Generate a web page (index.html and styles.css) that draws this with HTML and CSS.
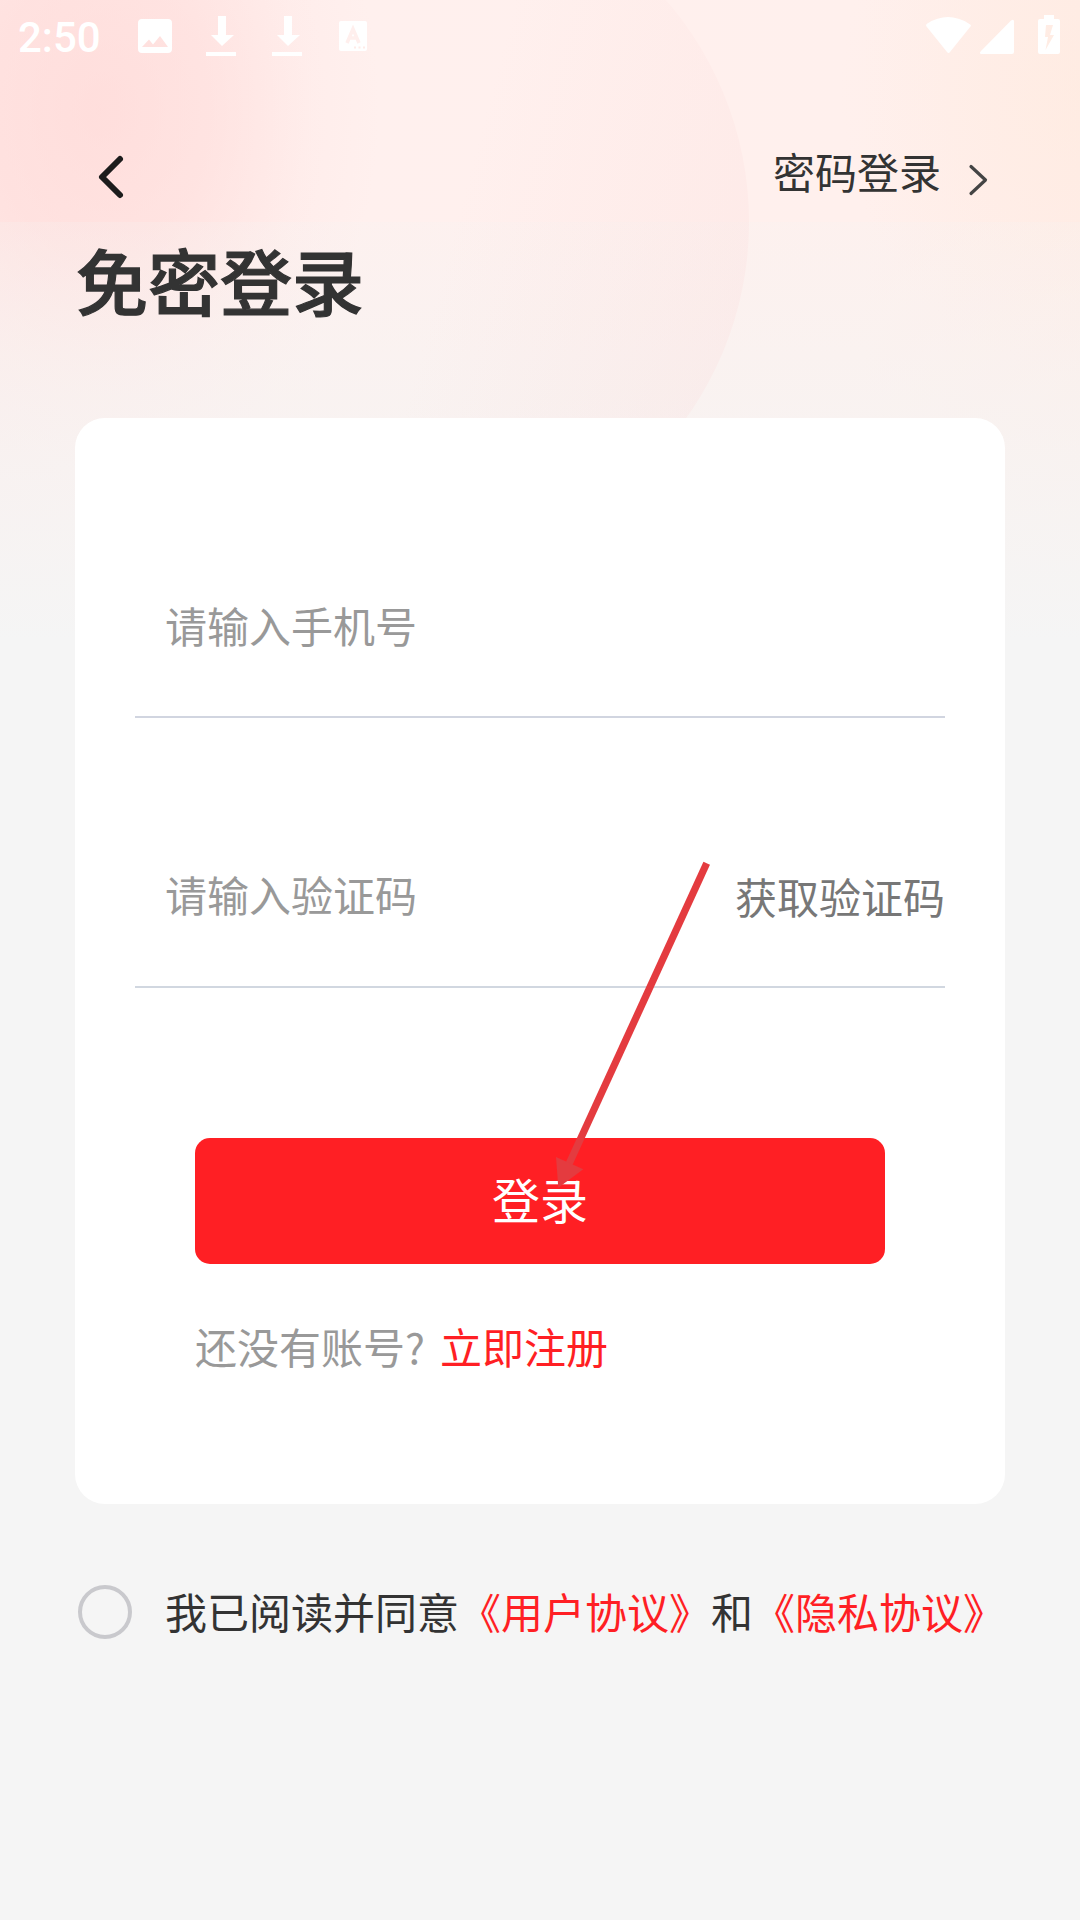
FILE: index.html
```html
<!DOCTYPE html>
<html lang="zh-CN">
<head>
    <meta charset="UTF-8">
    <meta name="viewport" content="width=device-width, initial-scale=1.0">
    <title>免密登录</title>
    <link rel="stylesheet" href="styles.css">
</head>
<body>
    <div class="page">
        <!-- status bar -->
        <div class="status">
            <span class="time">2:50</span>
            <svg class="status-left" width="240" height="60" viewBox="0 0 240 60" fill="#fff">
                <path fill-rule="evenodd" d="M11 19h26a4 4 0 0 1 4 4v26a4 4 0 0 1-4 4H11a4 4 0 0 1-4-4V23a4 4 0 0 1 4-4zM11 47h26l-8-11-7 8.500-4-5z"/>
                <path d="M87 16h8v19h8L91 46 80 35h7zM75 52h30v4H75z"/>
                <path d="M153 16h8v19h8l-12 11-11-11h7zM141 52h30v4h-30z"/>
                <path d="M210 21h24a2 2 0 0 1 2 2v26a2 2 0 0 1-2 2h-24a2 2 0 0 1-2-2V23a2 2 0 0 1 2-2z"/>
                <path d="M216 43l6-14 6 14M218.500 38h7" fill="none" stroke="#ffefed" stroke-width="3.500"/>
                <path d="M223 46.500h2v2h-2zM227.500 46.500h2v2h-2zM232 46.500h2v2h-2z" fill="#ffebe8"/>
            </svg>
            <svg class="status-right" width="140" height="60" viewBox="0 0 140 60" fill="#fff">
                <path d="M6.500 26.500Q5.200 25 7 23.700Q28 10.500 49 23.700Q51.800 25 50.500 26.500L30 52Q28.500 54 27 52z"/>
                <path d="M61 51L91 20.500Q94 18.500 94 21.500V52Q94 54 92 54H61.500Q58.500 53.500 61 51z"/>
                <path fill-rule="evenodd" d="M124 15h10v4h4q2 0 2 2v31q0 2-2 2h-18q-2 0-2-2V21q0-2 2-2h4zM126 25l-1 12h3l-2.500 13L134 35h-4l3-10z"/>
            </svg>
        </div>

        <div class="nav">
            <a class="back" href="#">
                <svg width="30" height="46" viewBox="0 0 30 46"><path d="M24 5L6 23l18 18" fill="none" stroke="#1c1c1c" stroke-width="6" stroke-linecap="round" stroke-linejoin="round"/></svg>
            </a>
            <a class="switch" href="#">密码登录
                <svg width="24" height="36" viewBox="0 0 24 36"><path d="M4 4.500l14.500 13.500L4 31.500" fill="none" stroke="#444" stroke-width="3.200" stroke-linecap="round" stroke-linejoin="round"/></svg>
            </a>
        </div>
        <h1>免密登录</h1>

        <!-- login form -->
        <div class="card">
            <div class="row">
                <input class="field" type="text" placeholder="请输入手机号">
            </div>
            <div class="row row-code">
                <input class="field" type="text" placeholder="请输入验证码">
                <span class="code">获取验证码</span>
            </div>
            <button class="login">登录</button>
            <p class="register">还没有账号?<a href="#">立即注册</a></p>
        </div>

        <div class="agree">
            <span class="radio"></span>
            <p>我已阅读并同意<a href="#">《用户协议》</a>和<a href="#">《隐私协议》</a></p>
        </div>

        <!-- arrow to the login button -->
        <svg class="arrow" width="160" height="330" viewBox="0 0 160 330">
            <path d="M156.700 3.300L19 304" stroke="#e43b3f" stroke-width="7.200"/>
            <path d="M6 297l27.300 12.300-25 18.400z" fill="#e43b3f"/>
        </svg>
    </div>
</body>
</html>
```
FILE: styles.css
```css
* {
    box-sizing: border-box;
    margin: 0;
    padding: 0;
}
body {
    background-color: #f5f5f5;
    font-family: "Noto Sans CJK SC", sans-serif;
    font-size: 42px;
    line-height: 60px;
    color: #333;
}
a {
    color: #ff1f24;
    text-decoration: none;
}
.page {
    position: relative;
    z-index: 0;
    height: 1920px;
    overflow: hidden;
    background:
        linear-gradient(to bottom, rgba(245, 244, 243, 0) 222px, rgba(245, 244, 243, 0.22) 222px, rgba(245, 244, 243, 0.6) 400px, #f5f5f5 640px),
        radial-gradient(ellipse 280px 360px at 100px 110px, rgba(255, 205, 203, 0.46), rgba(255, 205, 203, 0.32) 40%, rgba(255, 205, 203, 0.08) 75%, rgba(255, 205, 203, 0) 100%),
        radial-gradient(ellipse 240px 280px at 1080px 90px, rgba(255, 233, 216, 0.35), rgba(255, 233, 216, 0) 100%),
        linear-gradient(to right, #ffebe9, #fff0ee 30%, #fff0ed 80%, #ffede8);
}
/* big circle behind the header */
.page::before {
    content: "";
    position: absolute;
    z-index: -1;
    left: 73px;
    top: -116px;
    width: 676px;
    height: 676px;
    border-radius: 50%;
    background: linear-gradient(105deg, rgba(250, 214, 214, 0) 55%, rgba(250, 214, 214, 0.26) 98%);
}

/* status bar */
.status {
    display: flex;
    height: 72px;
}
.time {
    width: 131px;
    padding: 8px 0 0 18px;
    font-family: Roboto, sans-serif;
    font-weight: 500;
    color: #fff;
}
.status-right {
    margin-left: auto;
    margin-right: 20px;
}

.nav {
    display: flex;
    justify-content: space-between;
    height: 150px;
    padding: 69px 89px 0 96px;
}
.back {
    height: 46px;
    padding-top: 13px;
    line-height: 0;
}
.switch {
    display: flex;
    gap: 26px;
    color: #333;
}
.switch svg {
    margin-top: 21px;
}
h1 {
    margin-left: 76px;
    height: 196px;
    padding-top: 7px;
    font-size: 72px;
    line-height: 100px;
    font-weight: 500;
    -webkit-text-stroke: 1.2px #333;
}

/* form card */
.card {
    width: 930px;
    height: 1086px;
    margin: 0 auto;
    padding: 30px 60px 0;
    border-radius: 30px;
    background-color: #fff;
}
.row {
    display: flex;
    height: 270px;
    padding: 147px 0 0 30px;
    border-bottom: 2px solid #d1d5e0;
}
.row-code {
    padding-top: 146px;
    border-bottom-color: #d1d7e0;
}
.field {
    flex: 1;
    min-width: 0;
    height: 60px;
    border: none;
    outline: none;
    background: none;
    font: inherit;
}
.field::placeholder {
    color: #999;
    opacity: 1;
}
.code {
    padding-top: 2px;
    color: #777;
}
.login {
    display: block;
    width: 690px;
    height: 126px;
    margin: 150px auto 52px;
    padding-bottom: 7px;
    border: none;
    border-radius: 15px;
    background-color: #ff1f24;
    color: #fff;
    font-family: inherit;
    font-size: 48px;
}
.register {
    padding-left: 60px;
    color: #999;
}
.register a {
    margin-left: 15px;
}

.agree {
    display: flex;
    padding: 77px 0 0 78px;
}
.radio {
    width: 54px;
    height: 54px;
    margin: 4px 33px 0 0;
    border: 4px solid #c9c9cd;
    border-radius: 50%;
}

.arrow {
    position: absolute;
    left: 550px;
    top: 860px;
}
```
